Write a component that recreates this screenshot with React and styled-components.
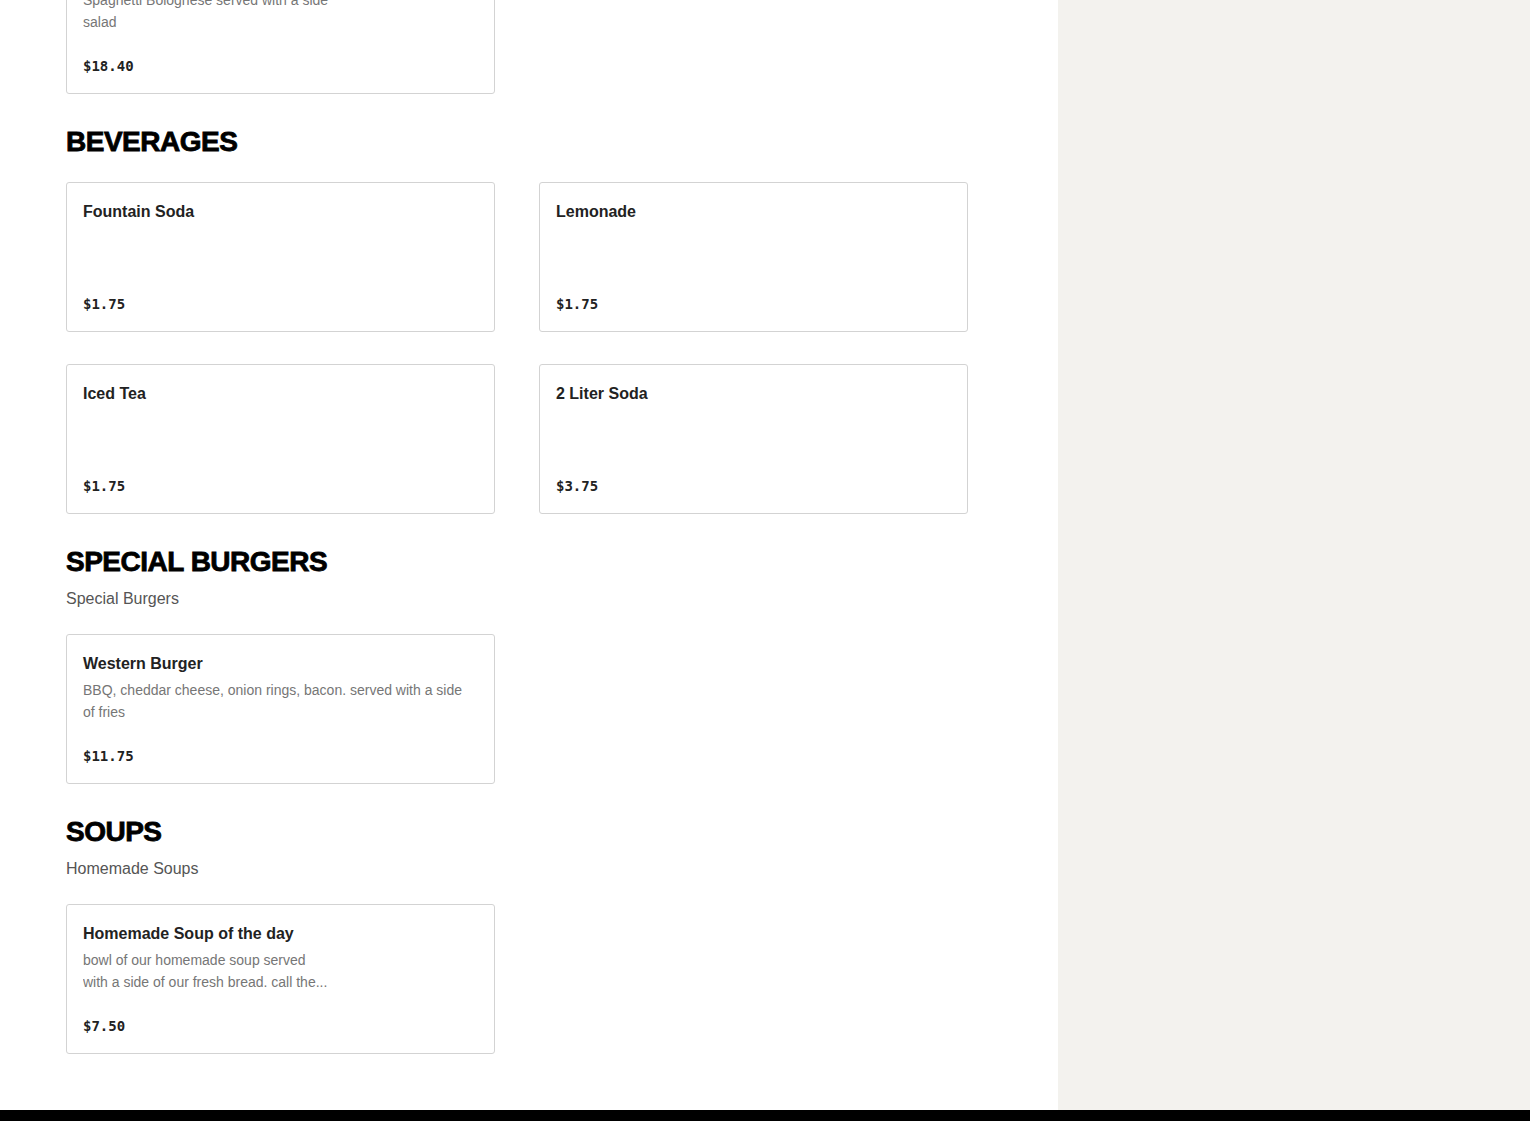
import React from 'react';
import styled, { createGlobalStyle } from 'styled-components';

const GlobalStyle = createGlobalStyle`
  html, body {
    margin: 0;
    padding: 0;
    background: #ffffff;
    overflow: hidden;
  }
  body {
    font-family: 'Liberation Sans', Arial, sans-serif;
    color: #222;
  }
`;

// the screenshot is scrolled a little; the wrapper keeps that offset
const Page = styled.div`
  margin-top: -56px;
  display: flex;
  flex-direction: column;
`;

const Body = styled.div`
  display: flex;
  align-items: stretch;
`;

const Main = styled.main`
  width: 1058px;
  flex-shrink: 0;
  padding: 0 66px 56px;
  box-sizing: border-box;
  display: flex;
  flex-direction: column;
  gap: 32px;
`;

const Sidebar = styled.aside`
  flex: 1;
  background-color: #f3f2ee;
`;

const Footer = styled.footer`
  height: 240px;
  background-color: #000;
`;

const Section = styled.section`
  display: flex;
  flex-direction: column;
`;

const SectionTitle = styled.h2`
  margin: 0;
  font-family: 'Liberation Sans', Arial, sans-serif;
  font-weight: 900;
  font-size: 28px;
  line-height: 32px;
  letter-spacing: -0.5px;
  color: #000;
  -webkit-text-stroke: 0.8px #000;
  text-transform: uppercase;
`;

const SectionNote = styled.p`
  margin: 9px 0 -1px;
  font-size: 16px;
  line-height: 24px;
  color: #555;
`;

const Grid = styled.div`
  margin-top: ${({ $flush }) => ($flush ? '0' : '24px')};
  display: grid;
  grid-template-columns: repeat(2, 429px);
  column-gap: 44px;
  row-gap: 32px;
`;

const Card = styled.div`
  height: 150px;
  box-sizing: border-box;
  border: 1px solid #d3d3d3;
  border-radius: 3px;
  padding: 17px 28px 17px 16px;
  display: flex;
  flex-direction: column;
  background: #fff;
`;

const ItemName = styled.h3`
  margin: 0;
  font-size: 16px;
  line-height: 24px;
  font-weight: 600;
  color: #222;
`;

const ItemDesc = styled.p`
  margin: 3px 0 0;
  font-size: 14px;
  line-height: 22px;
  color: #767676;
  white-space: pre-line;
  display: -webkit-box;
  -webkit-line-clamp: 2;
  -webkit-box-orient: vertical;
  overflow: hidden;
`;

const Price = styled.span`
  margin-top: auto;
  font-family: 'DejaVu Sans Mono', 'Liberation Mono', monospace;
  font-weight: bold;
  font-size: 14px;
  line-height: 20px;
  color: #222;
`;

const menu = [
  {
    items: [
      {
        name: 'Spaghetti Bolognese',
        desc: 'Spaghetti Bolognese served with a side\nsalad',
        price: '$18.40',
      },
    ],
  },
  {
    title: 'Beverages',
    items: [
      { name: 'Fountain Soda', price: '$1.75' },
      { name: 'Lemonade', price: '$1.75' },
      { name: 'Iced Tea', price: '$1.75' },
      { name: '2 Liter Soda', price: '$3.75' },
    ],
  },
  {
    title: 'Special Burgers',
    note: 'Special Burgers',
    items: [
      {
        name: 'Western Burger',
        desc: 'BBQ, cheddar cheese, onion rings, bacon. served with a side of fries',
        price: '$11.75',
      },
    ],
  },
  {
    title: 'Soups',
    note: 'Homemade Soups',
    items: [
      {
        name: 'Homemade Soup of the day',
        desc: 'bowl of our homemade soup served\nwith a side of our fresh bread. call the...',
        price: '$7.50',
      },
    ],
  },
];

const MenuCard = ({ item }) => (
  <Card>
    <ItemName>{item.name}</ItemName>
    {item.desc && <ItemDesc>{item.desc}</ItemDesc>}
    <Price>{item.price}</Price>
  </Card>
);

const App = () => {
  return (
    <>
      <GlobalStyle />
      <Page>
        <Body>
          <Main>
            {menu.map((section, i) => (
              <Section key={i}>
                {section.title && <SectionTitle>{section.title}</SectionTitle>}
                {section.note && <SectionNote>{section.note}</SectionNote>}
                <Grid $flush={!section.title}>
                  {section.items.map((item) => (
                    <MenuCard key={item.name} item={item} />
                  ))}
                </Grid>
              </Section>
            ))}
          </Main>
          <Sidebar />
        </Body>
        <Footer />
      </Page>
    </>
  );
};

export default App;
